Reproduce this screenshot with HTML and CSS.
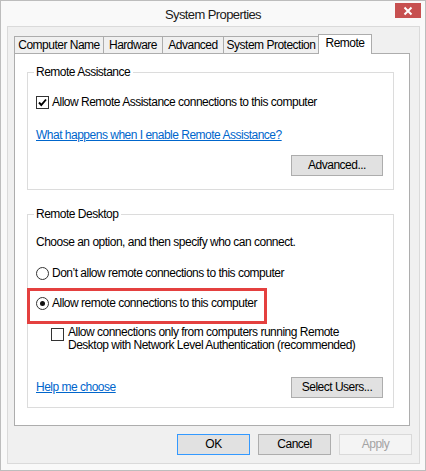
FILE: index.html
```html
<!DOCTYPE html>
<html>
<head>
<meta charset="utf-8">
<link rel="stylesheet" href="styles.css">
</head>
<body>
<div class="window">
  <div class="titlebar">
    <span class="title">System Properties</span>
    <span class="close"><svg width="10" height="10" viewBox="0 0 10 10"><path d="M1.5 1.5 L8.5 8.5 M8.5 1.5 L1.5 8.5" stroke="#fff" stroke-width="2" fill="none"/></svg></span>
  </div>
  <div class="client">
    <div class="tabs">
      <div class="tab tab-cn">Computer Name</div>
      <div class="tab tab-hw">Hardware</div>
      <div class="tab tab-adv">Advanced</div>
      <div class="tab tab-sp">System Protection</div>
      <div class="tab tab-active tab-rm">Remote</div>
    </div>
    <div class="panel">
      <div class="group group-ra">
        <div class="group-title">Remote Assistance</div>
        <div class="row row-check">
          <span class="checkbox"><svg width="11" height="11" viewBox="0 0 11 11"><path d="M2 5.5 L4.3 8 L9 2.5" stroke="#000" stroke-width="1.9" fill="none"/></svg></span>
          <span>Allow Remote Assistance connections to this computer</span>
        </div>
        <div class="row row-link"><a class="link" href="#">What happens when I enable Remote Assistance?</a></div>
        <div class="btn-row"><button class="btn btn-wide">Advanced...</button></div>
      </div>
      <div class="group group-rd">
        <div class="group-title">Remote Desktop</div>
        <div class="row row-choose">Choose an option, and then specify who can connect.</div>
        <div class="row row-radio1"><span class="radio"></span><span>Don’t allow remote connections to this computer</span></div>
        <div class="row row-radio2"><span class="radio radio-on"></span><span>Allow remote connections to this computer</span><span class="highlight"></span></div>
        <div class="row-nla">
          <span class="checkbox checkbox-nla"></span>
          <span class="nla-text">Allow connections only from computers running Remote<br>Desktop with Network Level Authentication (recommended)</span>
        </div>
        <div class="bottom-row"><a class="link" href="#">Help me choose</a><button class="btn btn-wide">Select Users...</button></div>
      </div>
    </div>
    <div class="dialog-buttons">
      <button class="btn btn-dlg btn-ok">OK</button>
      <button class="btn btn-dlg">Cancel</button>
      <button class="btn btn-dlg btn-disabled">Apply</button>
    </div>
  </div>
</div>
</body>
</html>
```
FILE: styles.css
```css
* { box-sizing: border-box; }
html, body { margin: 0; padding: 0; background: #fff; }
body {
  font-family: "Liberation Sans", Arial, sans-serif;
  font-size: 12px;
  letter-spacing: -0.5px;
  color: #000;
}
.window {
  width: 426px;
  height: 471px;
  border: 1px solid #bdbdbd;
  background: #f9f9f9;
  display: flex;
  flex-direction: column;
}
.titlebar {
  position: relative;
  height: 25px;
  display: flex;
  align-items: center;
  justify-content: center;
  padding-top: 1px;
}
.title {
  font-size: 13px;
  letter-spacing: -0.6px;
  color: #1a1a1a;
}
.close {
  position: absolute;
  top: 2px;
  right: 4px;
  width: 26px;
  height: 15px;
  background: #c75050;
  display: flex;
  align-items: center;
  justify-content: center;
}
.close svg { display: block; }
.client {
  margin: 0 5px 6px 6px;
  height: 438px;
  border: 1px solid #dadada;
  background: #f0f0f0;
  display: flex;
  flex-direction: column;
}
.tabs {
  margin: 7px 0 0 6px;
  height: 19px;
  display: flex;
  align-items: flex-end;
}
.tab {
  height: 17px;
  border: 1px solid #acacac;
  border-bottom: none;
  background: #f0f0f0;
  margin-right: -1px;
  line-height: 15px;
  padding-top: 1px;
  text-align: center;
  white-space: nowrap;
}
.tab-cn { width: 90px; }
.tab-hw { width: 60px; }
.tab-adv { width: 62px; }
.tab-sp { width: 96px; }
.tab-rm { width: 54px; }
.tab-active {
  height: 20px;
  margin-bottom: -1px;
  background: #fff;
  position: relative;
  z-index: 1;
}
.panel {
  margin: 0 9px 0 6px;
  border: 1px solid #adadad;
  background: #fff;
  padding-bottom: 17px;
}
.group {
  border: 1px solid #dcdcdc;
  margin: 0 15px 0 12px;
  padding: 0 10px 0 8px;
  display: flex;
  flex-direction: column;
  line-height: 15px;
}
.group-ra { margin-top: 18px; padding-bottom: 13px; }
.group-rd { margin-top: 24px; padding-bottom: 9px; }
.group-title {
  align-self: flex-start;
  margin: -8px 0 0 -2px;
  padding: 0 3px 0 2px;
  background: #fff;
  height: 15px;
}
.row {
  height: 15px;
  display: flex;
  align-items: center;
  position: relative;
  white-space: nowrap;
}
.row-check { margin-top: 15px; }
.row-link { margin-top: 18px; }
.btn-row {
  margin-top: 12px;
  display: flex;
  justify-content: flex-end;
}
.row-choose { margin-top: 13px; }
.row-radio1 { margin-top: 16px; }
.row-radio2 { margin-top: 15px; }
.checkbox {
  width: 13px;
  height: 13px;
  border: 1px solid #333;
  background: #fff;
  margin-right: 3px;
  flex: none;
  display: flex;
  align-items: center;
  justify-content: center;
}
.checkbox svg { display: block; }
.radio {
  width: 13px;
  height: 13px;
  border: 1px solid #333;
  border-radius: 50%;
  background: #fff;
  margin-right: 3px;
  flex: none;
  display: flex;
  align-items: center;
  justify-content: center;
}
.radio-on::after {
  content: "";
  width: 5px;
  height: 5px;
  border-radius: 50%;
  background: #111;
}
.highlight {
  position: absolute;
  left: -9px;
  top: -8px;
  width: 240px;
  height: 36px;
  border: 3px solid #e4403f;
}
.row-nla {
  margin-top: 15px;
  display: flex;
  align-items: flex-start;
  line-height: 13px;
}
.checkbox-nla {
  margin: 2px 4px 0 15px;
}
.nla-text { white-space: nowrap; }
.bottom-row {
  margin-top: 25px;
  display: flex;
  align-items: center;
  justify-content: space-between;
}
.link {
  color: #0066cc;
  text-decoration: underline;
  white-space: nowrap;
}
.btn {
  font-family: inherit;
  font-size: 12px;
  letter-spacing: -0.5px;
  color: #000;
  height: 21px;
  border: 1px solid #adadad;
  background: #e1e1e1;
  padding: 0;
  margin: 0;
  line-height: 19px;
  text-align: center;
}
.btn-wide { width: 92px; }
.dialog-buttons {
  margin: 8px 7px 0 0;
  display: flex;
  justify-content: flex-end;
  gap: 8px;
}
.btn-dlg { width: 73px; }
.btn-ok { border-color: #3399ff; }
.btn-disabled {
  background: #f4f4f4;
  border-color: #d9d9d9;
  color: #a3a3a3;
}
```
